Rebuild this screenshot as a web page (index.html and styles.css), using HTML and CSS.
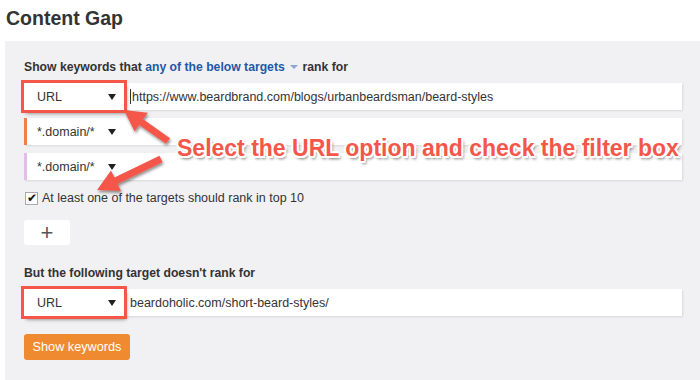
FILE: index.html
```html
<!DOCTYPE html>
<html lang="en">
<head>
  <meta charset="UTF-8" />
  <title>Content Gap</title>
  <link rel="stylesheet" href="styles.css">
</head>
<body>

  <!-- ───── heading ───── -->
  <h1 class="page-title">Content Gap</h1>

  <!-- ───── main panel ───── -->
  <div class="panel">
    <div class="label">
      Show keywords that <span class="label-link">any of the below targets <span class="caret-down"></span></span> rank for
    </div>

    <div class="target-row">
      <div class="select marked">URL <span class="tri"></span></div>
      <div class="target-input"><span class="cursor"></span>https://www.beardbrand.com/blogs/urbanbeardsman/beard-styles</div>
    </div>

    <div class="target-row">
      <div class="select accent-orange">*.domain/* <span class="tri"></span></div>
      <div class="target-input"></div>
    </div>

    <div class="target-row">
      <div class="select accent-purple">*.domain/* <span class="tri"></span></div>
      <div class="target-input"></div>
    </div>

    <label class="check-line">
      <span class="checkbox">&#10004;</span>
      At least one of the targets should rank in top 10
    </label>

    <button class="add-btn">+</button>

    <div class="label label-second">But the following target doesn't rank for</div>

    <div class="target-row">
      <div class="select marked">URL <span class="tri"></span></div>
      <div class="target-input">beardoholic.com/short-beard-styles/</div>
    </div>

    <button class="show-btn">Show keywords</button>
  </div>

  <!-- ───── annotation overlay ───── -->
  <svg class="arrows" width="700" height="380" viewBox="0 0 700 380">
    <defs>
      <filter id="shade" x="-20%" y="-20%" width="140%" height="140%">
        <feDropShadow dx="1" dy="2" stdDeviation="1.5" flood-color="#000" flood-opacity="0.45" />
      </filter>
    </defs>
    <g fill="#f4574a" filter="url(#shade)">
      <!-- arrow to the URL select -->
      <path transform="translate(168 141) rotate(215.2)"
            d="M0 -3.5 L32.8 -3.5 L32.8 -11.5 L53.8 0 L32.8 11.5 L32.8 3.5 L0 3.5 Z" />
      <!-- arrow to the checkbox -->
      <path transform="translate(161 159) rotate(154.2)"
            d="M0 -3.5 L50 -3.5 L50 -11.5 L71 0 L50 11.5 L50 3.5 L0 3.5 Z" />
    </g>
  </svg>
  <div class="note">Select the URL option and check the filter box</div>

</body>
</html>
```

FILE: styles.css
```css
:root {
  --c-text:    #333333;
  --c-link:    #1c5aa6;
  --c-red:     #f4574a;
  --c-orange:  #f08a30;
  --bg-panel:  #f1f1f3;
  --bg-field:  #ffffff;

  --font-base: "Liberation Sans", Arial, Helvetica, sans-serif;
}

/* ───── base ───── */
body {
  margin: 0;
  width: 700px;
  height: 380px;
  overflow: hidden;
  position: relative;
  font-family: var(--font-base);
  font-size: 12.5px;
  color: var(--c-text);
  background: #fff;
}

.page-title {
  margin: 0;
  height: 41px;
  padding: 6px 0 0 6px;
  box-sizing: border-box;
  font-size: 19.5px;
  line-height: 24px;
  font-weight: bold;
  color: #333;
}

/* ───── panel ───── */
.panel {
  margin-left: 5px;
  padding: 18px 18px 20px 19px;
  height: 339px;
  box-sizing: border-box;
  background: var(--bg-panel);
}

.label {
  font-size: 12.2px;
  font-weight: bold;
  line-height: 16px;
  margin-bottom: 8px;
}
.label-second { margin-top: 20px; }

.label-link { color: var(--c-link); }
.caret-down {
  display: inline-block;
  width: 0;
  height: 0;
  margin: 0 1px 2px 2px;
  border-left: 4px solid transparent;
  border-right: 4px solid transparent;
  border-top: 4px solid #8aa6d2;
}

/* ───── target rows ───── */
.target-row {
  display: flex;
  height: 27px;
  margin-bottom: 8px;
  background: var(--bg-field);
  box-shadow: 1px 1px 2px rgba(0, 0, 0, 0.1);
}

.select {
  width: 100px;
  flex: none;
  box-sizing: border-box;
  padding: 0 8px 0 13px;
  display: flex;
  align-items: center;
  justify-content: space-between;
  background: var(--bg-field);
}
.select.marked {
  outline: 3px solid var(--c-red);
  box-shadow: 2px 3px 4px rgba(0, 0, 0, 0.55);
  position: relative;
  z-index: 1;
}
.accent-orange { border-left: 3px solid #f47d4f; padding-left: 10px; }
.accent-purple { border-left: 3px solid #e2bfe9; padding-left: 10px; }

.tri {
  width: 0;
  height: 0;
  border-left: 4px solid transparent;
  border-right: 4px solid transparent;
  border-top: 6px solid #222;
}

.target-input {
  flex: 1;
  padding-left: 6px;
  display: flex;
  align-items: center;
  white-space: nowrap;
}
.cursor {
  width: 1px;
  height: 15px;
  background: #333;
  margin-right: 1px;
}

/* ───── checkbox ───── */
.check-line {
  display: flex;
  align-items: center;
  gap: 4px;
  margin-top: 10px;
  line-height: 16px;
}
.checkbox {
  width: 11px;
  height: 11px;
  margin-left: 1px;
  border: 1px solid #aaa;
  background: #fff;
  font-size: 12px;
  line-height: 10px;
  color: #111;
  text-align: center;
}

/* ───── buttons ───── */
.add-btn {
  display: block;
  margin-top: 14px;
  width: 46px;
  height: 25px;
  border: none;
  border-radius: 3px;
  background: #fff;
  color: #555;
  font-family: var(--font-base);
  font-size: 22px;
  font-weight: 300;
  line-height: 25px;
  padding: 0;
}

.show-btn {
  display: block;
  margin-top: 18px;
  width: 106px;
  height: 26px;
  border: none;
  border-radius: 3px;
  background: var(--c-orange);
  color: #fff;
  font-family: var(--font-base);
  font-size: 12.7px;
  padding: 0;
}

/* ───── annotation ───── */
.arrows {
  position: absolute;
  left: 0;
  top: 0;
  pointer-events: none;
  z-index: 2;
}

.note {
  position: absolute;
  left: 177px;
  top: 134px;
  z-index: 3;
  font-size: 23px;
  font-weight: bold;
  line-height: 28px;
  color: var(--c-red);
  white-space: nowrap;
  text-shadow:
    -2px 0 0 #fff, 2px 0 0 #fff, 0 -2px 0 #fff, 0 2px 0 #fff,
    -1.5px -1.5px 0 #fff, 1.5px -1.5px 0 #fff,
    -1.5px 1.5px 0 #fff, 1.5px 1.5px 0 #fff,
    2px 3px 3px rgba(0, 0, 0, 0.55);
}
```
